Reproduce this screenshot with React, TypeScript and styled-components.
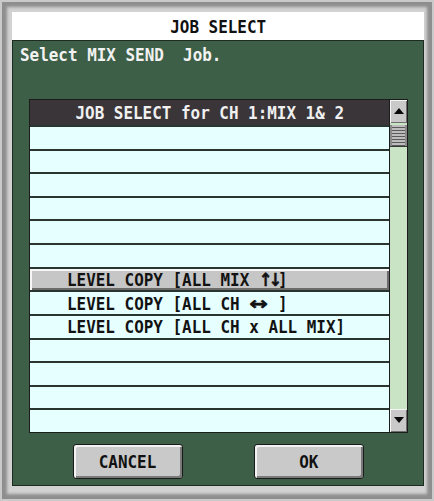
import React from "react";
import styled, { createGlobalStyle } from "styled-components";

const MONO = `"DejaVu Sans Mono", "Liberation Mono", monospace`;

const GlobalStyle = createGlobalStyle`
  html, body { margin: 0; padding: 0; background: #c9c9c9; }
  #root { width: 434px; height: 501px; }
`;

const Frame = styled.div`
  box-sizing: border-box;
  width: 434px;
  height: 501px;
  padding: 12px 10px 15px 12px;
  background: #d2d2d2;
  box-shadow: inset 0 0 0 2px #cacaca, inset 0 0 3px 7px #8e8e8e;
  display: flex;
  flex-direction: column;
  font-family: ${MONO};
  font-weight: bold;
  font-size: 18px;
`;

const TitleBar = styled.div`
  height: 28px;
  flex: none;
  background: #ffffff;
  color: #111;
  display: flex;
  align-items: center;
  justify-content: center;
`;

/* bitmap-style condensed lettering */
const Squeeze = styled.span<{ $origin?: string }>`
  display: inline-block;
  white-space: pre;
  transform: scaleX(0.885);
  transform-origin: ${(p) => p.$origin ?? "center"};
`;

/* heavy arrow glyph trimmed to one character cell */
const ArrowGlyph = styled.span`
  display: inline-block;
  font-family: "DejaVu Sans", sans-serif;
  font-size: 18px;
  letter-spacing: -4.24px;
  -webkit-text-stroke: 0.5px currentColor;
`;

/* double-width arrow: stretched glyph centred in a two-cell slot */
const WideArrow = styled.span`
  display: inline-block;
  font-family: "DejaVu Sans", sans-serif;
  font-size: 18px;
  margin: 0 3.3px;
  -webkit-text-stroke: 0.5px currentColor;
  transform: scaleX(1.4);
`;

const Panel = styled.div`
  flex: 1;
  box-sizing: border-box;
  background: #3d5f47;
  border: 1px solid #1d2b21;
  padding: 4px 15px 6px 7px;
  display: flex;
  flex-direction: column;
`;

const Message = styled.div`
  height: 20px;
  line-height: 20px;
  color: #f2f2f2;
  display: flex;
  align-items: center;
`;

const ListBox = styled.div`
  box-sizing: border-box;
  margin: 34px 0 0 9px;
  height: 334px;
  border: 1px solid #1c1c1c;
  display: grid;
  grid-template-columns: 1fr 18px;
`;

const ListMain = styled.div`
  display: grid;
  grid-template-rows: 25px repeat(13, 1fr);
  background: #e6ffff;
  min-height: 0;
`;

const Header = styled.div`
  background: #3a3539;
  color: #f0f0f0;
  display: flex;
  align-items: center;
  justify-content: center;
`;

const Row = styled.div<{ $selected?: boolean }>`
  box-sizing: border-box;
  border-top: 2px solid #2a3530;
  background: ${(p) => (p.$selected ? "#c6c6c6" : "#e6ffff")};
  box-shadow: ${(p) =>
    p.$selected
      ? "inset 2px 2px 0 #f6f6f6, inset -2px -2px 0 #6c6c6c"
      : "none"};
  color: #121212;
  padding-left: 37px;
  display: flex;
  align-items: center;
  min-height: 0;
`;

const ScrollBar = styled.div`
  border-left: 1px solid #1c1c1c;
  background: #c8e4c4;
  display: flex;
  flex-direction: column;
`;

const ArrowButton = styled.div`
  height: 23px;
  flex: none;
  background: #c9c9c9;
  box-shadow: inset 1px 1px 0 #f4f4f4, inset -1px -1px 0 #6e6e6e;
  display: flex;
  align-items: center;
  justify-content: center;
`;

const Thumb = styled.div`
  height: 21px;
  margin-top: 2px;
  flex: none;
  background: repeating-linear-gradient(
    to bottom,
    #bdbdbd 0px,
    #bdbdbd 2px,
    #5a5a5a 2px,
    #5a5a5a 3px
  );
  box-shadow: inset 2px 0 0 #8a8a8a, inset -2px 0 0 #8a8a8a;
  border-bottom: 1px solid #3a3a3a;
`;

const Track = styled.div`
  flex: 1;
`;

const ButtonRow = styled.div`
  margin: 11px 0 0 9px;
  display: flex;
  justify-content: center;
  gap: 71px;
`;

const Button = styled.button`
  box-sizing: border-box;
  width: 110px;
  height: 35px;
  padding: 0;
  border: 1px solid #1a1a1a;
  border-radius: 3px;
  background: #c9c9c9;
  box-shadow: inset 2px 2px 0 #f3f3f3, inset -2px -2px 0 #7a7a7a;
  color: #111;
  font-family: ${MONO};
  font-weight: bold;
  font-size: 18px;
  display: flex;
  align-items: center;
  justify-content: center;
`;

const Triangle = ({ down }: { down?: boolean }) => (
  <svg width="10" height="7" viewBox="0 0 10 7">
    <polygon
      points={down ? "0,0 10,0 5,6" : "5,0 10,6 0,6"}
      fill="#0a0a0a"
    />
  </svg>
);

type Item = { id: number; label?: React.ReactNode; selected?: boolean };

const items: Item[] = [
  { id: 1 },
  { id: 2 },
  { id: 3 },
  { id: 4 },
  { id: 5 },
  { id: 6 },
  {
    id: 7,
    selected: true,
    label: (
      <>
        {"LEVEL COPY [ALL MIX "}
        <ArrowGlyph>↑</ArrowGlyph>
        <ArrowGlyph>↓</ArrowGlyph>
        {"]"}
      </>
    ),
  },
  {
    id: 8,
    label: (
      <>
        {"LEVEL COPY [ALL CH "}
        <WideArrow>↔</WideArrow>
        {" ]"}
      </>
    ),
  },
  { id: 9, label: "LEVEL COPY [ALL CH x ALL MIX]" },
  { id: 10 },
  { id: 11 },
  { id: 12 },
  { id: 13 },
];

export default function App() {
  return (
    <>
      <GlobalStyle />
      <Frame>
        <TitleBar>
          <Squeeze>JOB SELECT</Squeeze>
        </TitleBar>
        <Panel>
          <Message>
            <Squeeze $origin="left">Select MIX SEND  Job.</Squeeze>
          </Message>
          <ListBox>
            <ListMain>
              <Header>
                <Squeeze>JOB SELECT for CH 1:MIX 1&amp; 2</Squeeze>
              </Header>
              {items.map((it) => (
                <Row key={it.id} $selected={it.selected}>
                  {it.label ? <Squeeze $origin="left">{it.label}</Squeeze> : null}
                </Row>
              ))}
            </ListMain>
            <ScrollBar>
              <ArrowButton>
                <Triangle />
              </ArrowButton>
              <Thumb />
              <Track />
              <ArrowButton>
                <Triangle down />
              </ArrowButton>
            </ScrollBar>
          </ListBox>
          <ButtonRow>
            <Button>
              <Squeeze>CANCEL</Squeeze>
            </Button>
            <Button>
              <Squeeze>OK</Squeeze>
            </Button>
          </ButtonRow>
        </Panel>
      </Frame>
    </>
  );
}
